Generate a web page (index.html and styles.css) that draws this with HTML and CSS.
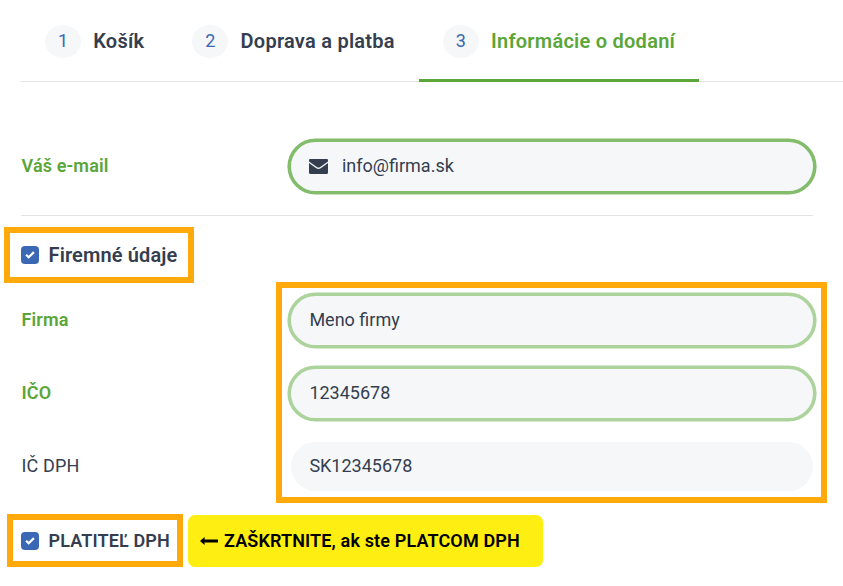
FILE: index.html
```
<!DOCTYPE html>
<html lang="sk">
<head>
    <meta charset="UTF-8">
    <meta name="viewport" content="width=device-width, initial-scale=1.0">
    <title>Informácie o dodaní</title>
    <link rel="stylesheet" href="styles.css">
</head>
<body>

<nav class="steps">
    <a class="step"><span class="step-number">1</span><span>Košík</span></a>
    <a class="step"><span class="step-number">2</span><span>Doprava a platba</span></a>
    <a class="step active"><span class="step-number">3</span><span>Informácie o dodaní</span></a>
</nav>

<form class="order-form">
    <div class="row email-row">
        <label class="valid" for="email">Váš e-mail</label>
        <div class="field field-focus">
            <svg class="icon-mail" viewBox="0 0 18 14">
                <path d="M1 0h16A1 1 0 0 1 18 1v1.2L10.3 7.6a2.3 2.3 0 0 1-2.6 0L0 2.2V1A1 1 0 0 1 1 0z"/>
                <path d="M0 3.7l6.9 5a3.6 3.6 0 0 0 4.2 0L18 3.7V13a1 1 0 0 1-1 1H1a1 1 0 0 1-1-1z"/>
            </svg>
            <input type="text" id="email" name="email" value="info@firma.sk">
        </div>
    </div>

    <label class="check company-check">
        <span class="checkbox"><svg viewBox="0 0 10 8"><path d="M1.1 3.7l2.6 2.6L8.9 1.1"/></svg></span>
        <span>Firemné údaje</span>
    </label>

    <div class="company">
        <div class="row">
            <label class="valid" for="company">Firma</label>
            <div class="field field-valid"><input type="text" id="company" name="company" value="Meno firmy"></div>
        </div>
        <div class="row">
            <label class="valid" for="ico">IČO</label>
            <div class="field field-valid"><input type="text" id="ico" name="ico" value="12345678"></div>
        </div>
        <div class="row">
            <label for="icdph">IČ DPH</label>
            <div class="field"><input type="text" id="icdph" name="icdph" value="SK12345678"></div>
        </div>
    </div>

    <div class="vat">
        <label class="check vat-check">
            <span class="checkbox"><svg viewBox="0 0 10 8"><path d="M1.1 3.7l2.6 2.6L8.9 1.1"/></svg></span>
            <span>PLATITEĽ DPH</span>
        </label>
        <div class="hint">
            <svg class="icon-arrow" viewBox="0 0 18 8"><path d="M0 4l4.6-4v2.6H18v2.8H4.6V8z"/></svg>
            <span>ZAŠKRTNITE, ak ste PLATCOM DPH</span>
        </div>
    </div>
</form>

</body>
</html>
```

FILE: styles.css
```
* {
    box-sizing: border-box;
}

body {
    margin: 0;
    font-family: Roboto, sans-serif;
    font-size: 18px;
    color: #343e4f;
    background-color: #ffffff;
}

/* order steps */
.steps {
    display: flex;
    height: 82px;
    margin-left: 21px;
    border-bottom: 1px solid #e2e4e5;
}

.step {
    display: flex;
    align-items: center;
    height: 82px;
    padding: 3px 24px 0;
    border-bottom: 3px solid transparent;
    font-size: 20px;
    font-weight: 600;
    letter-spacing: 0.25px;
    white-space: nowrap;
}

.step.active {
    color: #5aa638;
    border-bottom-color: #5aa638;
}

.step-number {
    display: flex;
    align-items: center;
    justify-content: center;
    width: 36px;
    height: 33px;
    margin-right: 12.2px;
    padding-bottom: 2px;
    border-radius: 50%;
    background-color: #f5f7f9;
    color: #3b68b5;
    font-size: 18px;
    font-weight: 400;
    letter-spacing: 0;
}

/* form */
.order-form {
    width: 813px;
    padding: 60px 0 0 21px;
}

.row {
    display: grid;
    grid-template-columns: 270px 1fr;
    align-items: center;
}

.row label {
    padding: 0 0 2px 0.5px;
    letter-spacing: 0.15px;
}

.email-row {
    padding-bottom: 24px;
    border-bottom: 1px solid #e2e4e5;
}

.valid {
    color: #5aa638;
    font-weight: 600;
}

.field {
    display: flex;
    align-items: center;
    height: 49px;
    padding: 0 18px;
    border-radius: 25px;
    background-color: #f5f7f9;
}

.field-focus {
    box-shadow: 0 0 0 3.6px #83bc6b;
}

.field-valid {
    box-shadow: 0 0 0 3.6px #acd39b;
}

.field input {
    flex: 1;
    min-width: 0;
    padding: 0 0 2px 0.4px;
    border: none;
    outline: none;
    background: transparent;
    font: inherit;
    color: inherit;
}

.icon-mail {
    width: 19px;
    height: 15px;
    margin-right: 13.6px;
    fill: #343e4f;
}

.check {
    display: inline-flex;
    align-items: center;
    border: 6px solid #ffaa0a;
    font-weight: 600;
    letter-spacing: 0.13px;
    white-space: nowrap;
}

.checkbox {
    display: flex;
    align-items: center;
    justify-content: center;
    width: 18px;
    height: 18px;
    margin-right: 9.5px;
    border-radius: 4px;
    background-color: #3b68b5;
}

.checkbox svg {
    width: 10px;
    height: 8px;
    fill: none;
    stroke: #ffffff;
    stroke-width: 2.2;
}

.company-check {
    display: flex;
    width: 190px;
    height: 56px;
    margin: 11px 0 13px -17px;
    padding-left: 11px;
    font-size: 20px;
}

.company {
    position: relative;
    display: grid;
    gap: 24px;
}

/* frame around the company inputs */
.company::after {
    content: "";
    position: absolute;
    top: -14px;
    right: -14px;
    bottom: -12px;
    left: 255px;
    border: 6px solid #ffaa0a;
    pointer-events: none;
}

.vat {
    display: flex;
    align-items: center;
    gap: 5px;
    margin: 23px 0 0 -14px;
}

.vat-check {
    width: 176px;
    height: 53px;
    padding-left: 8px;
}

.hint {
    display: flex;
    align-items: center;
    width: 355px;
    height: 52px;
    padding-left: 12px;
    border-radius: 7px;
    background-color: #ffee11;
    color: #000000;
    font-weight: 600;
    letter-spacing: 0.14px;
    white-space: nowrap;
}

.icon-arrow {
    width: 18px;
    height: 8px;
    margin-right: 6px;
}
```
